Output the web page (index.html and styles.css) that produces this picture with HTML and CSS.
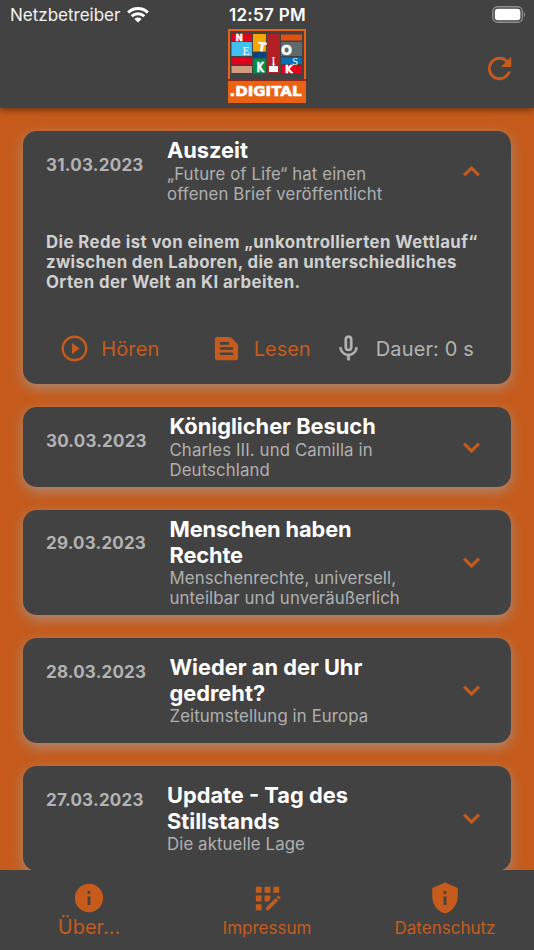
FILE: index.html
```html
<!DOCTYPE html>
<html lang="de">
<head>
<meta charset="utf-8">
<title>Netzkiosk</title>
<link rel="stylesheet" href="styles.css">
</head>
<body>
<div class="app">
  <header class="header">
    <div class="status">
      <div class="carrier"><span>Netzbetreiber</span>
        <svg width="22" height="16" viewBox="0 0 22 16" fill="none" stroke="#fff" stroke-width="3"><path d="M1.2 5.6A14 14 0 0 1 20.8 5.6M4.700 9.300A9 9 0 0 1 17.300 9.300"/><path d="M11 15.400L7.400 11.900A5.200 5.200 0 0 1 14.600 11.900Z" fill="#fff" stroke="none"/></svg>
      </div>
      <div class="time">12:57 PM</div>
      <svg class="battery" width="35" height="18" viewBox="0 0 35 18"><rect x=".8" y=".8" width="29.600" height="15.400" rx="4.800" fill="none" stroke="#909090" stroke-width="1.400"/><rect x="2.800" y="2.800" width="25.600" height="11.400" rx="3" fill="#fff"/><path d="M32 6Q34.200 8.500 32 11Z" fill="#909090"/></svg>
    </div>
    <div class="brand">
      <svg class="logo" width="80" height="76" viewBox="0 0 80 76">
        <rect x="2" y="2" width="76" height="50" fill="#424242" stroke="#eb6212" stroke-width="2"/>
        <path fill="#e2001a" d="M4.500 6h20.500v7H4.500zM4.500 30h20.500v6.500H4.500zM54 37.500h21v7.500H54z"/>
        <path fill="#41c0f0" d="M4.500 14h20.500v14H4.500z"/>
        <path fill="#cf9c80" d="M4.500 38h20.500v7H4.500z"/>
        <path fill="#f7a600" d="M26 6h13v17.500H26z"/>
        <path fill="#00438f" d="M26 24.500h13v5H26z"/>
        <path fill="#008c45" d="M26 30.500h13v15H26z"/>
        <path fill="#b12025" d="M40 6h13v39H40z"/>
        <path fill="#e6500e" d="M54 6.500h21v6H54z"/>
        <path fill="#5d6b70" d="M54 14h21v14H54z"/>
        <path fill="#0070ba" d="M54 29.500h21v6.500H54z"/>
        <path d="M42 38h9v6h-9zM46 34h1.200v5H46z" fill="#fff"/>
        <g fill="#fff">
          <text class="block" x="8.500" y="12.700" font-size="8.800" textLength="7.500" lengthAdjust="spacingAndGlyphs">N</text>
          <text class="serif" x="15.500" y="27" font-size="12">E</text>
          <text class="block" x="31" y="23" font-size="12" textLength="8" lengthAdjust="spacingAndGlyphs" transform="rotate(8 34 20)">T</text>
          <text class="block" x="29.500" y="44" font-size="14" textLength="7.500" lengthAdjust="spacingAndGlyphs">K</text>
          <text class="serif" x="44.300" y="37" font-size="13">I</text>
          <text class="block" x="54" y="27" font-size="14" textLength="11" lengthAdjust="spacingAndGlyphs">O</text>
          <text class="serif" x="65" y="37" font-size="11">S</text>
          <text class="block" x="58" y="45" font-size="10">K</text>
        </g>
        <path fill="#eb6212" d="M1 53h78v22H1z"/>
        <path fill="#8d2718" d="M0 51h80v2H0z"/>
        <text class="wordmark" x="2.500" y="67.500" textLength="72" lengthAdjust="spacingAndGlyphs">.DIGITAL</text>
      </svg>
      <svg class="refresh" viewBox="0 0 24 24"><path d="M17.650 6.350A7.958 7.958 0 0 0 12 4a8 8 0 1 0 7.730 10h-2.080A6 6 0 1 1 12 6c1.660 0 3.140.69 4.220 1.780L13 11h7V4z"/></svg>
    </div>
  </header>

  <main class="list">
    <article class="card open">
      <div class="summary">
        <time class="date d31">31.03.2023</time>
        <div class="copy"><h2>Auszeit</h2><p>„Future of Life“ hat einen<br>offenen Brief veröffentlicht</p></div>
        <svg class="chevron" viewBox="0 0 24 24"><path d="M12 8l-6 6 1.410 1.410L12 10.830l4.590 4.580L18 14z"/></svg>
      </div>
      <p class="lead">Die Rede ist von einem „unkontrollierten Wettlauf“<br><span class="lead-mid">zwischen den Laboren, die an unterschiedliches</span><br>Orten der Welt an KI arbeiten.</p>
      <div class="actions">
        <a class="action listen"><svg viewBox="0 0 24 24"><path d="M10 16.500l6-4.500-6-4.500zM12 2a10 10 0 1 0 0 20 10 10 0 0 0 0-20zm0 18.200a8.200 8.200 0 1 1 0-16.400 8.200 8.200 0 0 1 0 16.400z"/></svg><span>Hören</span></a>
        <a class="action read"><svg viewBox="0 0 24 24"><path fill-rule="evenodd" d="M20.410 8.410l-4.830-4.830A2 2 0 0 0 14.170 3H5a2 2 0 0 0-2 2v14a2 2 0 0 0 2 2h14a2 2 0 0 0 2-2V9.830a2 2 0 0 0-.59-1.420zM7 7h7v2H7zm10 10H7v-2h10zm0-4H7v-2h10z"/></svg><span>Lesen</span></a>
        <div class="action duration"><svg viewBox="0 0 24 24"><path d="M12 14a3 3 0 0 0 3-3V5a3 3 0 0 0-6 0v6a3 3 0 0 0 3 3zm-1.200-9.100a1.200 1.200 0 0 1 2.400 0v6.200a1.200 1.200 0 0 1-2.400 0zM17.300 11c0 3-2.540 5.100-5.300 5.100S6.700 14 6.700 11H5c0 3.410 2.720 6.230 6 6.720V21h2v-3.280c3.280-.48 6-3.300 6-6.720z"/></svg><span>Dauer: 0 s</span></div>
      </div>
    </article>
    <article class="card short">
      <div class="summary">
        <time class="date">30.03.2023</time>
        <div class="copy"><h2>Königlicher Besuch</h2><p>Charles III. und Camilla in<br>Deutschland</p></div>
        <svg class="chevron" viewBox="0 0 24 24"><path d="M16.590 8.590L12 13.170 7.410 8.590 6 10l6 6 6-6z"/></svg>
      </div>
    </article>
    <article class="card">
      <div class="summary">
        <time class="date">29.03.2023</time>
        <div class="copy"><h2 class="tight">Menschen haben<br>Rechte</h2><p>Menschenrechte, universell,<br>unteilbar und unveräußerlich</p></div>
        <svg class="chevron" viewBox="0 0 24 24"><path d="M16.590 8.590L12 13.170 7.410 8.590 6 10l6 6 6-6z"/></svg>
      </div>
    </article>
    <article class="card">
      <div class="summary">
        <time class="date">28.03.2023</time>
        <div class="copy"><h2>Wieder an der Uhr<br>gedreht?</h2><p>Zeitumstellung in Europa</p></div>
        <svg class="chevron" viewBox="0 0 24 24"><path d="M16.590 8.590L12 13.170 7.410 8.590 6 10l6 6 6-6z"/></svg>
      </div>
    </article>
    <article class="card">
      <div class="summary">
        <time class="date d27">27.03.2023</time>
        <div class="copy"><h2>Update - Tag des<br>Stillstands</h2><p>Die aktuelle Lage</p></div>
        <svg class="chevron" viewBox="0 0 24 24"><path d="M16.590 8.590L12 13.170 7.410 8.590 6 10l6 6 6-6z"/></svg>
      </div>
    </article>
  </main>

  <nav class="tabs">
    <a class="tab current"><svg viewBox="0 0 24 24"><path d="M12 2a10 10 0 1 0 0 20 10 10 0 0 0 0-20zm1 15h-2v-6h2zm0-8h-2V7h2z"/></svg><span>Über...</span></a>
    <a class="tab imprint"><svg viewBox="0 0 24 24"><path d="M10 4h4v4h-4zM4 16h4v4H4zM4 10h4v4H4zM4 4h4v4H4zM14 12.420V10h-4v4h2.420zM20.880 11.290l-1.170-1.170a.41.41 0 0 0-.58 0l-.88.88L20 12.750l.88-.88a.41.41 0 0 0 0-.58zM11 18.250V20h1.750l6.670-6.670-1.750-1.750zM16 4h4v4h-4z"/></svg><span>Impressum</span></a>
    <a class="tab privacy"><svg viewBox="0 0 24 24"><path d="M12 1L3 5v6c0 5.550 3.840 10.740 9 12 5.160-1.260 9-6.450 9-12V5zm1 16h-2v-6h2zm0-8h-2V7h2z"/></svg><span>Datenschutz</span></a>
  </nav>
</div>
</body>
</html>
```
FILE: styles.css
```css
* { box-sizing: border-box; }
body { margin: 0; font-family: Inter, "Liberation Sans", sans-serif; }
h2, p { margin: 0; }
svg { display: block; flex: none; }
.app { height: 950px; display: flex; flex-direction: column; overflow: hidden; background: #c65b1c; }
.header { position: relative; z-index: 1; flex: none; height: 108.400px; background: #424242; box-shadow: 0 2px 7px rgba(40, 20, 5, .6); }
.status { height: 28px; padding: 0 7px 0 10px; display: grid; grid-template-columns: 1fr auto 1fr; align-items: center; color: #fff; }
.carrier { display: flex; align-items: center; gap: 7px; font-size: 17px; color: #f2f2f2; padding-top: 2px; }
.time { font-size: 17px; font-weight: 600; letter-spacing: .3px; padding-top: 2px; margin-right: 2px; }
.battery { justify-self: end; margin-top: 1px; }
.brand { height: 80px; display: grid; grid-template-columns: 1fr 80px 1fr; }
.logo { grid-column: 2; margin-left: -.5px; }
.refresh { width: 35px; height: 35px; fill: #c65b1c; justify-self: end; margin: 23px 17px 0 0; }
.block, .wordmark { font-family: "DejaVu Sans", sans-serif; font-weight: 700; }
.block { stroke: #fff; stroke-width: .4px; }
.serif { font-family: "Liberation Serif", serif; }
.wordmark { font-size: 14.500px; fill: #fff; stroke: #fff; stroke-width: .6px; }
.list { flex: 1; min-height: 0; overflow: hidden; padding: 22.600px 23px 0; display: flex; flex-direction: column; gap: 23px; }
.card { flex: none; height: 105.100px; border-radius: 14px; background: #424242; box-shadow: 0 4px 13px rgba(158, 158, 158, .72); white-space: nowrap; }
.card.open { height: 253.500px; }
.card.short { height: 79.500px; }
.summary { height: 100%; display: flex; align-items: center; padding: 0 23.500px 0 23px; }
.open .summary { height: 79.500px; padding-top: .6px; }
.date { align-self: flex-start; width: 123.500px; padding-top: 22.500px; font-size: 17px; line-height: 22px; font-weight: 700; letter-spacing: .2px; color: #b3b3b3; }
.d31, .d27 { width: 121px; letter-spacing: .25px; }
.copy { flex: 1; }
h2 { font-size: 21.800px; line-height: 25.600px; font-weight: 700; color: #fff; }
.tight { letter-spacing: -.12px; }
.copy p { font-size: 16.800px; line-height: 20px; letter-spacing: .11px; color: #b0b0b0; }
.chevron { width: 33px; height: 33px; fill: #c65b1c; stroke: #c65b1c; stroke-width: .3px; }
.lead { padding: 21.600px 23px 0; font-size: 16.800px; line-height: 20px; font-weight: 700; letter-spacing: .41px; color: #d0d0d0; }
.lead-mid { letter-spacing: .36px; }
.actions { display: flex; align-items: center; height: 50px; margin-top: 31.800px; padding-left: 35.700px; }
.action { display: flex; align-items: center; font-size: 20px; letter-spacing: .15px; color: #c65b1c; }
.action svg { width: 31px; height: 31px; fill: currentColor; }
.listen { width: 152px; gap: 11.500px; }
.read { width: 122.500px; gap: 12px; letter-spacing: 0; }
.duration { gap: 11.500px; color: #b3b3b3; letter-spacing: .15px; }
.duration svg { stroke: currentColor; stroke-width: .3px; }
.tabs { position: relative; flex: none; height: 80px; background: #424242; display: grid; grid-template-columns: repeat(3, 1fr); }
.tab { display: flex; flex-direction: column; align-items: center; padding-top: 11px; color: #c65b1c; font-size: 17px; line-height: 24px; }
.tab svg { width: 34px; height: 34px; fill: currentColor; }
.imprint svg { width: 35px; height: 35px; margin: -.5px 0 -.5px; }
.tab span { margin-top: 1.200px; }
.tab.current { font-size: 20px; }
.current span { margin-top: 0; }
```
